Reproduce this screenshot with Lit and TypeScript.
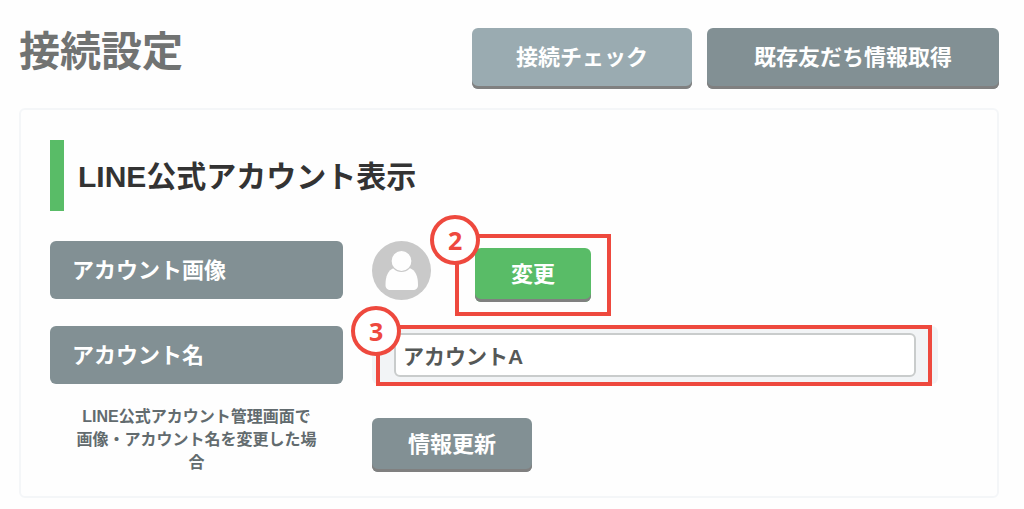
import { LitElement, html, css } from "lit";
import { customElement, property, state } from "lit/decorators.js";

@customElement("step-callout")
class StepCallout extends LitElement {
  @property() step = "";

  static styles = css`
    :host {
      position: absolute;
      box-sizing: border-box;
      border: 4px solid #ee493e;
      pointer-events: none;
    }
    .badge {
      position: absolute;
      top: -23px;
      left: -29px;
      width: 50px;
      height: 50px;
      box-sizing: border-box;
      border: 4px solid #ee493e;
      border-radius: 50%;
      background: #fff;
      color: #ee493e;
      font: 700 25px/42px "Noto Sans", sans-serif;
      text-align: center;
    }
  `;

  render() {
    return html`<span class="badge">${this.step}</span>`;
  }
}

@customElement("app-root")
class AppRoot extends LitElement {
  @state() private accountName = "アカウントA";

  static styles = css`
    :host {
      display: block;
      background: #fefefe;
      color: #333;
      font-family: "Liberation Sans", "Noto Sans CJK JP", sans-serif;
      font-weight: 700;
    }
    * {
      box-sizing: border-box;
    }
    .page {
      padding: 28px 25px 11px 19px;
    }
    .header {
      display: flex;
      align-items: flex-start;
      gap: 15px;
      margin-bottom: 19px;
    }
    .title {
      flex: 1;
      margin: 0;
      color: #717372;
      font-size: 41px;
      line-height: 48px;
    }
    .btn {
      border: 0;
      border-radius: 6px;
      padding: 0 36px 1px;
      height: 54px;
      background: #829094;
      box-shadow: inset 0 -3px #808080;
      color: #fff;
      font: inherit;
      font-size: 22px;
      line-height: 32px;
      cursor: pointer;
    }
    .btn.tall {
      height: 61px;
      padding: 0 47px 1px;
    }
    .btn.short {
      padding: 0 44px 1px;
    }
    .btn.pale {
      background: #9aabb1;
    }
    .btn.green {
      background: #59bc67;
    }
    .card {
      padding: 30px 59px 22px 29px;
      border: 2px solid #f4f6f8;
      border-radius: 6px;
    }
    .section {
      margin: 0 0 30px;
      padding: 2px 0 0 14px;
      border-left: 14px solid #59bc67;
      font-size: 30px;
      line-height: 69px;
    }
    .row {
      display: grid;
      grid-template-columns: 33% 1fr;
      column-gap: 29px;
      align-items: center;
    }
    .row + .row {
      margin-top: 27px;
    }
    .row + .row.last {
      margin-top: 21px;
    }
    .label {
      padding: 1px 22px 0;
      border-radius: 6px;
      background: #829094;
      color: #fff;
      font-size: 22px;
      line-height: 57px;
    }
    .image {
      display: flex;
      align-items: center;
      height: 58px;
      gap: 44px;
    }
    .avatar {
      display: block;
      width: 59px;
      height: 59px;
    }
    .marked {
      position: relative;
      display: flex;
      padding-top: 10px;
    }
    .around-button {
      inset: -4px -20px -14px;
    }
    .field {
      position: relative;
      padding: 7px 22px;
      border-radius: 6px;
      background: #f2f4f6;
    }
    .around-field {
      inset: -1px 6px -2px 4px;
    }
    .input {
      display: block;
      width: 100%;
      height: 44px;
      padding: 0 7px;
      border: 2px solid #c9cccc;
      border-radius: 6px;
      background: #fff;
      color: #555857;
      font: inherit;
      font-size: 21px;
    }
    .note {
      margin: 0;
      padding: 0 24px;
      color: #626b6e;
      font-size: 16px;
      line-height: 23px;
      text-align: center;
    }
    .action {
      padding-top: 11px;
    }
  `;

  private rename(e: Event) {
    this.accountName = (e.target as HTMLInputElement).value;
  }

  render() {
    return html`
      <main class="page">
        <header class="header">
          <h1 class="title">接続設定</h1>
          <button class="btn tall short pale" type="button">接続チェック</button>
          <button class="btn tall" type="button">既存友だち情報取得</button>
        </header>
        <section class="card">
          <h2 class="section">LINE公式アカウント表示</h2>
          <div class="row">
            <div class="label">アカウント画像</div>
            <div class="image">
              <svg class="avatar" viewBox="0 0 59 59" role="img" aria-label="アカウント画像">
                <circle cx="29.5" cy="29.5" r="29.5" fill="#c9c9c9" />
                <path
                  d="M22 27C16 29 13.500 35 13.500 44C13.500 47.500 15.500 49 18.500 49H41C44 49 46 47.500 46 44C46 35 43.500 29 37.500 27Z"
                  fill="#fefefe"
                />
                <circle cx="29.5" cy="20" r="10.5" fill="#fefefe" stroke="#c9c9c9" stroke-width="1.2" />
              </svg>
              <div class="marked">
                <button class="btn green" type="button">変更</button>
                <step-callout class="around-button" step="2"></step-callout>
              </div>
            </div>
          </div>
          <div class="row">
            <label class="label" for="account-name">アカウント名</label>
            <div class="field">
              <input
                class="input"
                id="account-name"
                type="text"
                .value=${this.accountName}
                @input=${this.rename}
              />
              <step-callout class="around-field" step="3"></step-callout>
            </div>
          </div>
          <div class="row last">
            <p class="note">LINE公式アカウント管理画面で<br />画像・アカウント名を変更した場合</p>
            <div class="action"><button class="btn" type="button">情報更新</button></div>
          </div>
        </section>
      </main>
    `;
  }
}
